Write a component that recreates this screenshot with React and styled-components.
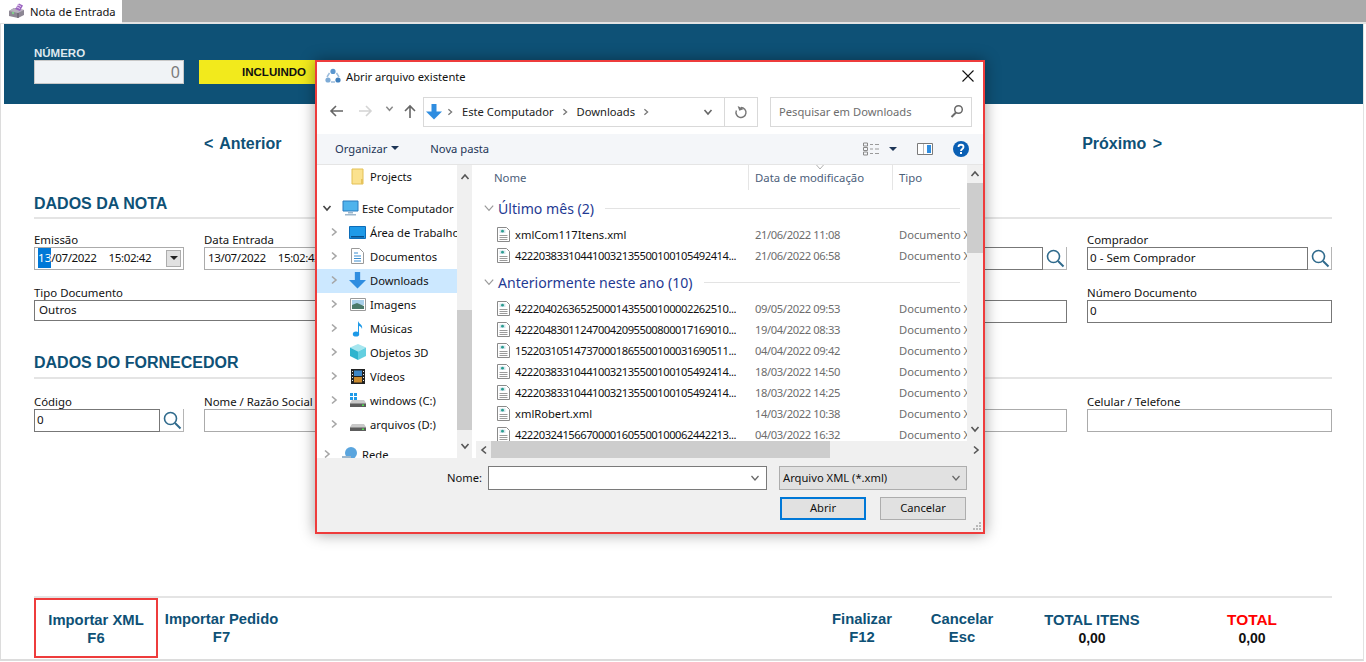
import React from "react";
import styled, { createGlobalStyle } from "styled-components";

const Global = createGlobalStyle`
  html, body { margin: 0; padding: 0; background: #fff; }
  body { width: 1366px; height: 662px; overflow: hidden; font-family: "Noto Sans", "Open Sans", sans-serif; }
  * { box-sizing: border-box; }
`;

const UI = `"Noto Sans", "Open Sans", sans-serif`;
const HEAD = `"Liberation Sans", Arial, sans-serif`;
const NAVY = "#0e5176";

const Screen = styled.div`position: relative; width: 1366px; height: 662px; overflow: hidden;`;

const TabBar = styled.div`
  height: 24px; background: #ababab; border-bottom: 2px solid #e3e3e3; display: flex;
`;
const Tab = styled.div`
  width: 122px; height: 23px; background: #fff; display: flex; align-items: center; gap: 5px;
  padding: 0 0 1px 8px; font: 11.2px ${UI}; color: #111;
`;
const Frame = styled.div`
  width: 1364px; height: 637px; border-left: 1px solid #dcdcdc; border-right: 1px solid #e2e2e2; border-bottom: 2px solid #dcdcdc;
  display: flex; flex-direction: column;
`;
const Header = styled.header`
  margin-left: 3px; height: 80px; background: ${NAVY}; padding: 0 0 20px 30px; display: flex; gap: 15px; align-items: flex-end;
`;
const NumberField = styled.div`width: 150px; display: flex; flex-direction: column;`;
const NumberLabel = styled.label`font: bold 11.5px/14px ${HEAD}; color: #dfe8ee;`;
const NumberInput = styled.div`
  height: 24px; background: #f0f3f6; border: 1px solid #c8c8c8; text-align: right; padding-right: 3px;
  font: 16px/22px ${UI}; color: #7b7b7b;
`;
const StatusBadge = styled.div`
  width: 150px; height: 24px; background: #f2ea1c; font: bold 11.5px/24px ${HEAD}; color: #111; text-align: center;
`;
const Content = styled.main`flex: 1; padding: 0 31px 0 33px; display: flex; flex-direction: column;`;
const Pager = styled.nav`
  height: 78px; display: flex; justify-content: space-between; align-items: center; padding: 2px 170px 0 170px;
  font: bold 16px ${HEAD}; color: ${NAVY};
  word-spacing: 2px;
`;
const SectionTitle = styled.h2`
  margin: ${p => p.$top}px 0 0; font: bold 16px/18px ${HEAD}; color: ${NAVY}; padding-bottom: ${p => p.$bottom}px; border-bottom: 2px solid #e4e4e4;
`;
const Row = styled.div`display: flex; gap: 20px; margin-top: ${p => p.$top}px;`;
const Field = styled.div`
  flex: ${p => (p.$w ? `0 0 ${p.$w}px` : "1")}; min-width: 0; display: flex; flex-direction: column;
`;
const Label = styled.label`font: 11.4px/13px ${UI}; color: #111; white-space: nowrap; height: 14px;`;
const Inputs = styled.div`display: flex;`;
const Input = styled.div`
  flex: 1; height: ${p => p.$h || 23}px; border: 1px solid ${p => (p.$strong ? "#777" : "#ababab")}; background: #fff;
  font: 11.6px/${p => (p.$h || 23) - 3}px ${UI}; color: #111; padding: 0 0 1px ${p => p.$pad ?? 1}px; white-space: pre;
  display: flex; align-items: center; min-width: 0; overflow: hidden;
`;
const DateText = styled.span`letter-spacing: -0.4px;`;
const Selected = styled.span`background: #0078d7; color: #fff;`;
const TimeText = styled.span`margin-left: 12px; letter-spacing: -0.4px;`;
const DropBtn = styled.span`
  margin-left: auto; margin-right: 2px; width: 15px; height: 17px; background: #e1e1e1; border: 1px solid #adadad;
  display: flex; align-items: center; justify-content: center;
`;
const Caret = styled.i`
  display: block; width: 0; height: 0; border-left: ${p => p.$s || 4}px solid transparent; border-right: ${p => p.$s || 4}px solid transparent;
  border-top: ${p => p.$s || 4}px solid ${p => p.$c || "#222"};
`;
const LookupBtn = styled.span`
  width: 24px; height: 23px; border-right: 1px solid #b5b5b5; border-bottom: 1px solid #b5b5b5; display: flex; align-items: center; justify-content: center;
`;
const Footer = styled.footer`
  margin-top: auto; height: 63px; border-top: 2px solid #e4e4e4; display: flex; position: relative;
`;
const FooterBtn = styled.button`
  flex: 0 0 ${p => p.$w}px; margin: 0; padding: 0 0 2px; border: 0; background: none; font: bold 14.8px/18px ${HEAD}; color: ${NAVY};
  ${p => p.$left && "margin-left: auto;"}
`;
const Annotated = styled(FooterBtn)`border: 2px solid #ee3c3c; height: 60px; padding: 1px 0 0;`;
const TotalBox = styled.div`
  flex: 0 0 160px; text-align: center; padding-top: 13px; font: bold 14px/18px ${HEAD}; color: #111;
`;
const TotalTitle = styled.div`color: ${p => p.$c}; font-size: ${p => p.$fs}px;`;

/* dialog */
const Dialog = styled.div`
  position: absolute; left: 315px; top: 60px; width: 670px; height: 474px; background: #fff; border: 2px solid #ee3c3c;
  box-shadow: 0 0 14px rgba(0,0,0,.38); display: flex; flex-direction: column; color: #111; font: 11.2px ${UI};
`;
const TitleBar = styled.div`height: 28px; display: flex; align-items: center; padding: 0 8px; gap: 5px;`;
const TitleText = styled.span`flex: 1;`;
const NavBar = styled.div`height: 44px; display: flex; padding: 7px 11px 7px 0; align-items: stretch;`;
const NavIcons = styled.div`width: 106px; display: flex; align-items: center; position: relative; flex: none;`;
const NavIcon = styled.span`position: absolute; left: ${p => p.$x}px; top: 7px; display: flex;`;
const Crumbs = styled.div`
  width: 335px; border: 1px solid #d9d9d9; display: flex; align-items: center; flex: none; color: #222;
`;
const CrumbIcon = styled.span`margin: 0 4px 0 2px; display: flex;`;
const Crumb = styled.span`margin: 0 7px 2px 8px; white-space: nowrap;`;
const CrumbTail = styled.div`margin-left: auto; display: flex; align-items: stretch; height: 100%;`;
const CrumbDrop = styled.span`width: 32px; display: flex; align-items: center; justify-content: center;`;
const CrumbRefresh = styled.span`width: 33px; border-left: 1px solid #d9d9d9; display: flex; align-items: center; justify-content: center;`;
const SearchBox = styled.div`
  margin-left: 12px; flex: 1; border: 1px solid #d9d9d9; display: flex; align-items: center; padding: 0 7px 2px 8px; color: #6d6d6d; justify-content: space-between;
`;
const ToolBar = styled.div`
  height: 31px; background: #f4f6f9; border-bottom: 1px solid #e5e5e5; display: flex; align-items: center; padding: 0 14px 2px 18px;
`;
const ToolItem = styled.span`display: inline-flex; align-items: center; gap: 4px; margin-right: ${p => p.$mr || 0}px; color: #1d3557;`;
const ToolRight = styled.div`margin-left: auto; display: flex; align-items: center; gap: 20px; margin-bottom: -2px;`;
const ViewGroup = styled.span`display: flex; align-items: center; gap: 9px;`;
const Body = styled.div`height: 293px; display: flex; flex: none;`;
const Tree = styled.div`width: 140px; overflow: hidden; flex: none;`;
const TreeRow = styled.div`
  height: 24px; display: flex; align-items: center; position: relative; white-space: nowrap; overflow: hidden;
  padding: 0 0 2px ${p => p.$indent}px; margin-top: ${p => p.$top || 0}px; background: ${p => (p.$sel ? "#cce8ff" : "transparent")};
`;
const TreeChevron = styled.span`width: 14px; flex: none; display: flex; justify-content: center; margin-right: 7px;`;
const TreeIcon = styled.span`width: 19px; flex: none; display: flex; justify-content: center; margin-right: ${p => p.$mr}px;`;
const TreeFolder = styled.span`display: flex; margin-right: 5px;`;
const VScroll = styled.div`
  width: ${p => p.$w}px; flex: none; background: #f0f0f0; display: flex; flex-direction: column;
`;
const ScrollBtn = styled.span`height: ${p => p.$h || 24}px; flex: none; display: flex; align-items: center; justify-content: center;`;
const Thumb = styled.span`
  display: block; flex: none; background: #cdcdcd; height: ${p => p.$h}px; margin-top: ${p => p.$mt}px;
`;
const ScrollEnd = styled.span`margin-top: auto; height: 24px; display: flex; align-items: center; justify-content: center;`;
const FilePane = styled.div`margin-left: 4px; flex: 1; min-width: 0; display: flex; flex-direction: column; position: relative;`;
const PaneTop = styled.div`flex: 1; min-height: 0; display: flex;`;
const FileArea = styled.div`flex: 1; min-width: 0; overflow: hidden;`;
const ColHead = styled.div`height: 25px; display: flex; color: #4c607a; position: relative; font-size: 11.35px;`;
const Col = styled.span`
  flex: 0 0 ${p => p.$w}px; padding-left: ${p => p.$pad}px; line-height: 26px; border-right: ${p => (p.$div ? "1px solid #e5e5e5" : "0")};
  white-space: nowrap;
`;
const SortMark = styled.span`position: absolute; left: 339px; top: -3px; display: flex;`;
const GroupHead = styled.div`
  height: 24px; margin-top: ${p => p.$top}px; margin-bottom: 4px; display: flex; align-items: center; padding-left: 7px; color: #1f3a93; font-size: 14.1px; gap: 3px;
`;
const GroupLine = styled.span`flex: 1; height: 1px; background: #e3e3e3; margin: 0 7px 0 8px;`;
const FileRow = styled.div`height: 21px; display: flex; align-items: center; color: #111; white-space: nowrap;`;
const FileName = styled.span`
  flex: 0 0 279px; padding-left: 21px; display: flex; align-items: center; gap: 5px; overflow: hidden;
  letter-spacing: ${p => (p.$digits ? "-0.47px" : "0")};
  svg { flex: none; }
`;
const FileDate = styled.span`flex: 0 0 144px; color: #6d6d6d; letter-spacing: -0.38px;`;
const FileType = styled.span`flex: none; color: #6d6d6d;`;
const HScroll = styled.div`height: 17px; background: #f0f0f0; display: flex; align-items: center; flex: none;`;
const HThumb = styled.span`display: block; width: 339px; height: 17px; background: #cdcdcd;`;
const HBtn = styled.span`width: 15px; flex: none; display: flex; justify-content: center; margin-left: ${p => (p.$end ? "auto" : 0)};`;
const BottomBar = styled.div`flex: 1; background: #f0f0f0; position: relative; padding: 8px 16px 0 130px;`;
const NameRow = styled.div`display: flex; align-items: center; height: 24px;`;
const NameLabel = styled.span`margin: 0 5px 2px 0; width: 36px;`;
const NameInput = styled.div`
  width: 279px; height: 24px; background: #fff; border: 1px solid #7a7a7a; display: flex; align-items: center; justify-content: flex-end; padding-right: 6px;
`;
const TypeSelect = styled.div`
  margin-left: 12px; width: 188px; height: 24px; background: #e1e1e1; border: 1px solid #adadad; display: flex; align-items: center; justify-content: space-between; padding: 0 5px 0 3px;
`;
const TypeText = styled.span`padding-bottom: 2px;`;
const BtnRow = styled.div`display: flex; justify-content: flex-end; gap: 14px; margin: 7px 1px 0 0;`;
const DlgBtn = styled.button`
  width: 86px; height: 23px; padding: 0 0 2px; background: #e1e1e1; font: 11.2px ${UI}; color: #111;
  border: ${p => (p.$primary ? "2px solid #0078d7" : "1px solid #adadad")};
`;
const Grip = styled.span`position: absolute; right: 1px; bottom: 1px; display: flex;`;

const Svg = ({ w = 16, h = 16, vb, children }) => <svg width={w} height={h} viewBox={vb || `0 0 ${w} ${h}`}>{children}</svg>;

const Magnifier = () => (
  <Svg w={20} h={20}><circle cx="8.5" cy="8.5" r="6" fill="none" stroke="#2f6a8c" strokeWidth="1.6" /><path d="M13 13l5.5 5.5" stroke="#2f6a8c" strokeWidth="2" /></Svg>
);
const Chev = ({ dir = "right", c = "#a6a6a6", s = 10, sw = 1.6 }) => {
  const d = { right: "M3 1.5L7 5L3 8.5", left: "M7 1.5L3 5L7 8.5", up: "M1.5 7L5 3L8.5 7", down: "M1.5 3L5 7L8.5 3" }[dir];
  return <Svg w={s} h={s} vb="0 0 10 10"><path d={d} fill="none" stroke={c} strokeWidth={sw} /></Svg>;
};
const DownArrow = ({ s = 16 }) => (
  <Svg w={s} h={s} vb="0 0 16 16"><path d="M5.5 0h5v7.5H16L8 15.5 0 7.5h5.5z" fill="#2f8de0" /></Svg>
);
const AppIcon = () => (
  <Svg w={17} h={16}>
    <path d="M1 8l5-3 10 2v5l-6 3-9-2z" fill="#8d8794" />
    <path d="M1 8l5-3 10 2-6 3z" fill="#b8b2bf" />
    <path d="M7 6l4-5.5 4 2L12 8z" fill="#9a63c0" />
    <path d="M9 1.5l4 2M8 3.5l4 2" stroke="#e6d3f2" strokeWidth="1" />
    <circle cx="5" cy="10" r="1.2" fill="#7fd08a" />
    <path d="M10 10v5" stroke="#5d5763" />
  </Svg>
);
const DialogIcon = () => (
  <Svg w={16} h={16}>
    <circle cx="8" cy="3.4" r="2.6" fill="#5b97cf" />
    <circle cx="3" cy="12" r="2.6" fill="#7eabd6" />
    <circle cx="13" cy="12" r="2.6" fill="#3f7fbd" />
    <path d="M4.5 5L2 9M11.5 5L14 9M6 14h4" fill="none" stroke="#9dbddc" strokeWidth="1.5" />
  </Svg>
);
const FolderIcon = () => (
  <Svg w={14} h={17}><path d="M1 1h11v15H1z" fill="#fbe28f" stroke="#e3c055" /><path d="M10 11h2v5h-2z" fill="#e6c35c" /></Svg>
);
const PcIcon = () => (
  <Svg w={17} h={16}><path d="M1 1h15v10H1z" fill="#4fb3ec" stroke="#2a7bbd" /><path d="M6 12h5v1.5H6zM3 14h11v1.5H3z" fill="#9db7cc" /></Svg>
);
const DesktopIcon = () => (
  <Svg w={17} h={13}><path d="M.5.5h16v12H.5z" fill="#1e9ae8" stroke="#0c6cb8" /><path d="M2 10h13v1.5H2z" fill="#0a4f8a" /></Svg>
);
const DocsIcon = () => (
  <Svg w={13} h={16}><path d="M.5.5h8l4 4v11H.5z" fill="#fff" stroke="#9a9a9a" /><path d="M3 5h4M3 8h7M3 10.5h7M3 13h7" stroke="#3a8dd0" /></Svg>
);
const ImageIcon = () => (
  <Svg w={16} h={13}><path d="M.5.5h15v12H.5z" fill="#fff" stroke="#9a9a9a" /><path d="M2 2h12v5H2z" fill="#a9d0ea" /><path d="M2 7l5-2 7 3v3H2z" fill="#4a7a6a" /></Svg>
);
const MusicIcon = () => (
  <Svg w={12} h={17}><ellipse cx="4" cy="14" rx="3.2" ry="2.6" fill="#1e9ae8" /><path d="M6 14V1c1 3 5 3.5 4 8-.6-2.2-2-3-3-3v8z" fill="#1e9ae8" /></Svg>
);
const CubeIcon = () => (
  <Svg w={16} h={16}><path d="M8 0l8 3.5-8 4-8-4z" fill="#a6e6ef" /><path d="M0 3.5l8 4V16l-8-4z" fill="#2fb4ce" /><path d="M16 3.5l-8 4V16l8-4z" fill="#63cfe0" /></Svg>
);
const FilmIcon = () => (
  <Svg w={14} h={15}><path d="M0 0h14v15H0z" fill="#222" /><path d="M3 1.5h8v5.5H3z" fill="#3d86c6" /><path d="M3 8h8v5.5H3z" fill="#c98a2e" /><path d="M1 2h1v1H1zm0 3h1v1H1zm0 3h1v1H1zm0 3h1v1H1zm11-9h1v1h-1zm0 3h1v1h-1zm0 3h1v1h-1zm0 3h1v1h-1z" fill="#eee" /></Svg>
);
const DriveIcon = ({ win }) => (
  <Svg w={16} h={14}>
    {win && <path d="M0 0h3v3H0zm4 0h3v3H4zM0 4h3v3H0zm4 0h3v3H4z" fill="#1e9ae8" />}
    <path d="M2 7h12l2 3v3H0v-3z" fill="#c9c9c9" /><path d="M0 10.5h16V14H0z" fill="#5d5d5d" /><path d="M12 11.5h2v1.5h-2z" fill="#4fe04f" />
  </Svg>
);
const NetIcon = () => (
  <Svg w={17} h={16}><circle cx="9" cy="7" r="6" fill="#5aa5de" /><path d="M0 10h9v5H0z" fill="#9db7cc" /></Svg>
);
const FileIcon = () => (
  <Svg w={13} h={15}>
    <path d="M.5.5h9l3 3v11H.5z" fill="#fff" stroke="#8a8a8a" />
    <path d="M2.5 2.5h6v3.5h-6z" fill="#d6e6ee" /><circle cx="5.5" cy="4.2" r="1.4" fill="#2a9d8f" />
    <path d="M2.5 8.5h8M2.5 10.5h8M2.5 12.5h8" stroke="#9a9a9a" />
  </Svg>
);

const treeItems = [
  ["Área de Trabalho", <DesktopIcon />],
  ["Documentos", <DocsIcon />],
  ["Downloads", <DownArrow s={17} />, true],
  ["Imagens", <ImageIcon />],
  ["Músicas", <MusicIcon />],
  ["Objetos 3D", <CubeIcon />],
  ["Vídeos", <FilmIcon />],
  ["windows (C:)", <DriveIcon win />],
  ["arquivos (D:)", <DriveIcon />],
];
const recent = [
  ["xmlCom117Itens.xml", "21/06/2022 11:08"],
  ["422203833104410032135500100105492414...", "21/06/2022 06:58", true],
];
const older = [
  ["422204026365250001435500100002262510...", "09/05/2022 09:53", true],
  ["422204830112470042095500800017169010...", "19/04/2022 08:33", true],
  ["152203105147370001865500100031690511...", "04/04/2022 09:42", true],
  ["422203833104410032135500100105492414...", "18/03/2022 14:50", true],
  ["422203833104410032135500100105492414...", "18/03/2022 14:25", true],
  ["xmlRobert.xml", "14/03/2022 10:38"],
  ["422203241566700001605500100062442213...", "04/03/2022 16:32", true],
];
const Files = ({ items }) => items.map(([n, d, digits], i) => (
  <FileRow key={i}>
    <FileName $digits={digits}><FileIcon />{n}</FileName>
    <FileDate>{d}</FileDate>
    <FileType>Documento XML</FileType>
  </FileRow>
));

export default function App() {
  return (
    <Screen>
      <Global />
      <TabBar><Tab><AppIcon />Nota de Entrada</Tab></TabBar>
      <Frame>
        <Header>
          <NumberField>
            <NumberLabel>NÚMERO</NumberLabel>
            <NumberInput>0</NumberInput>
          </NumberField>
          <StatusBadge>INCLUINDO</StatusBadge>
        </Header>
        <Content>
          <Pager><span>&lt; Anterior</span><span>Próximo &gt;</span></Pager>
          <SectionTitle $top={13} $bottom={4}>DADOS DA NOTA</SectionTitle>
          <Row $top={14}>
            <Field $w={150}>
              <Label>Emissão</Label>
              <Inputs><Input $pad={3}><Selected>13</Selected><DateText>/07/2022</DateText><TimeText>15:02:42</TimeText><DropBtn><Caret /></DropBtn></Input></Inputs>
            </Field>
            <Field $w={150}>
              <Label>Data Entrada</Label>
              <Inputs><Input $pad={3}><DateText>13/07/2022</DateText><TimeText>15:02:42</TimeText></Input></Inputs>
            </Field>
            <Field>
              <Label />
              <Inputs><Input $strong /><LookupBtn><Magnifier /></LookupBtn></Inputs>
            </Field>
            <Field $w={245}>
              <Label>Comprador</Label>
              <Inputs><Input $strong $pad={2}>0 - Sem Comprador</Input><LookupBtn><Magnifier /></LookupBtn></Inputs>
            </Field>
          </Row>
          <Row $top={16}>
            <Field $w={500}>
              <Label>Tipo Documento</Label>
              <Inputs><Input $strong $h={21} $pad={4}>Outros</Input></Inputs>
            </Field>
            <Field>
              <Label />
              <Inputs><Input $strong /></Inputs>
            </Field>
            <Field $w={245}>
              <Label>Número Documento</Label>
              <Inputs><Input $strong $pad={2}>0</Input></Inputs>
            </Field>
          </Row>
          <SectionTitle $top={31} $bottom={5}>DADOS DO FORNECEDOR</SectionTitle>
          <Row $top={16}>
            <Field $w={150}>
              <Label>Código</Label>
              <Inputs><Input $strong $pad={2}>0</Input><LookupBtn><Magnifier /></LookupBtn></Inputs>
            </Field>
            <Field $w={500}>
              <Label>Nome / Razão Social</Label>
              <Inputs><Input /></Inputs>
            </Field>
            <Field>
              <Label />
              <Inputs><Input /></Inputs>
            </Field>
            <Field $w={245}>
              <Label>Celular / Telefone</Label>
              <Inputs><Input /></Inputs>
            </Field>
          </Row>
          <Footer>
            <Annotated $w={124}>Importar XML<br />F6</Annotated>
            <FooterBtn $w={127}>Importar Pedido<br />F7</FooterBtn>
            <FooterBtn $w={100} $left>Finalizar<br />F12</FooterBtn>
            <FooterBtn $w={100}>Cancelar<br />Esc</FooterBtn>
            <TotalBox><TotalTitle $c={NAVY} $fs={14.8}>TOTAL ITENS</TotalTitle>0,00</TotalBox>
            <TotalBox><TotalTitle $c="#f00" $fs={15.4}>TOTAL</TotalTitle>0,00</TotalBox>
          </Footer>
        </Content>
      </Frame>

      <Dialog>
        <TitleBar>
          <DialogIcon />
          <TitleText>Abrir arquivo existente</TitleText>
          <Svg w={14} h={14}><path d="M1.5 1.5l11 11M12.5 1.5l-11 11" stroke="#111" strokeWidth="1.1" /></Svg>
        </TitleBar>
        <NavBar>
          <NavIcons>
            <NavIcon $x={12}><Svg w={15} h={14}><path d="M14 7H2M7 2L2 7l5 5" fill="none" stroke="#666" strokeWidth="1.6" /></Svg></NavIcon>
            <NavIcon $x={41}><Svg w={15} h={14}><path d="M1 7h12M8 2l5 5-5 5" fill="none" stroke="#d4d4d4" strokeWidth="1.6" /></Svg></NavIcon>
            <NavIcon $x={68}><Chev dir="down" c="#8a8a8a" s={9} /></NavIcon>
            <NavIcon $x={86}><Svg w={14} h={15}><path d="M7 14V2M2 7l5-5 5 5" fill="none" stroke="#666" strokeWidth="1.6" /></Svg></NavIcon>
          </NavIcons>
          <Crumbs>
            <CrumbIcon><DownArrow /></CrumbIcon>
            <Chev c="#777" s={8} />
            <Crumb>Este Computador</Crumb>
            <Chev c="#777" s={8} />
            <Crumb>Downloads</Crumb>
            <Chev c="#777" s={8} />
            <CrumbTail>
              <CrumbDrop><Chev dir="down" c="#666" /></CrumbDrop>
              <CrumbRefresh><Svg w={14} h={14}><path d="M7 2.5a5 5 0 1 1-4.6 3" fill="none" stroke="#777" strokeWidth="1.4" /><path d="M4.5 0v5h5z" fill="#777" transform="rotate(-20 7 3)" /></Svg></CrumbRefresh>
            </CrumbTail>
          </Crumbs>
          <SearchBox>
            <span>Pesquisar em Downloads</span>
            <Svg w={14} h={14}><circle cx="8.5" cy="5.5" r="3.8" fill="none" stroke="#6a6a6a" strokeWidth="1.5" /><path d="M6 8.5L1.5 13" stroke="#6a6a6a" strokeWidth="2" /></Svg>
          </SearchBox>
        </NavBar>
        <ToolBar>
          <ToolItem $mr={31}>Organizar <Caret $s={4} $c="#1d3557" /></ToolItem>
          <ToolItem>Nova pasta</ToolItem>
          <ToolRight>
            <ViewGroup>
              <Svg w={17} h={14}><path d="M.5 1h4v3h-4zM.5 5.5h4v3h-4zM.5 10h4v3h-4z" fill="none" stroke="#8a8a8a" /><path d="M7 2.5h3M12 2.5h4M7 7h3M12 7h4M7 11.5h3M12 11.5h4" stroke="#9a9a9a" /></Svg>
              <Caret $s={4} $c="#1d3557" />
            </ViewGroup>
            <Svg w={16} h={12}><path d="M.5.5h15v11H.5z" fill="#fff" stroke="#7a7a7a" /><path d="M10 2h4v8h-4z" fill="#2f8de0" /><path d="M6.5 1v10" stroke="#bbb" /></Svg>
            <Svg w={16} h={16}>
              <circle cx="8" cy="8" r="8" fill="#0a5fb4" />
              <path d="M5.5 6C5.5 3 10.5 3 10.5 6c0 2-2.5 2-2.5 4" fill="none" stroke="#fff" strokeWidth="1.8" /><path d="M7 11h2v2H7z" fill="#fff" />
            </Svg>
          </ToolRight>
        </ToolBar>
        <Body>
          <Tree>
            <TreeRow $indent={34}><TreeFolder><FolderIcon /></TreeFolder>Projects</TreeRow>
            <TreeRow $indent={3} $top={8}><TreeChevron><Chev dir="down" c="#444" /></TreeChevron><TreeIcon $mr={2}><PcIcon /></TreeIcon>Este Computador</TreeRow>
            {treeItems.map(([t, icon, sel]) => (
              <TreeRow key={t} $indent={10} $sel={sel}><TreeChevron><Chev c="#a6a6a6" /></TreeChevron><TreeIcon $mr={3}>{icon}</TreeIcon>{t}</TreeRow>
            ))}
            <TreeRow $indent={3} $top={6}><TreeChevron><Chev c="#a6a6a6" /></TreeChevron><TreeIcon $mr={2}><NetIcon /></TreeIcon>Rede</TreeRow>
          </Tree>
          <VScroll $w={15}>
            <ScrollBtn><Chev dir="up" c="#555" /></ScrollBtn>
            <Thumb $h={120} $mt={121} />
            <ScrollEnd><Chev dir="down" c="#555" /></ScrollEnd>
          </VScroll>
          <FilePane>
            <PaneTop>
              <FileArea>
                <ColHead>
                  <Col $w={273} $pad={18} $div>Nome</Col>
                  <Col $w={144} $pad={6} $div>Data de modificação</Col>
                  <Col $w={75} $pad={6}>Tipo</Col>
                  <SortMark><Chev dir="down" c="#b0b0b0" sw={1} /></SortMark>
                </ColHead>
                <GroupHead $top={6}><Chev dir="down" c="#9a9a9a" s={12} sw={1} />Último mês (2)<GroupLine /></GroupHead>
                <Files items={recent} />
                <GroupHead $top={4}><Chev dir="down" c="#9a9a9a" s={12} sw={1} />Anteriormente neste ano (10)<GroupLine /></GroupHead>
                <Files items={older} />
              </FileArea>
              <VScroll $w={16}>
                <ScrollBtn $h={18}><Chev dir="up" c="#555" /></ScrollBtn>
                <Thumb $h={70} $mt={0} />
                <ScrollEnd><Chev dir="down" c="#555" /></ScrollEnd>
              </VScroll>
            </PaneTop>
            <HScroll>
              <HBtn><Chev dir="left" c="#555" /></HBtn>
              <HThumb />
              <HBtn $end><Chev c="#555" /></HBtn>
            </HScroll>
          </FilePane>
        </Body>
        <BottomBar>
          <NameRow>
            <NameLabel>Nome:</NameLabel>
            <NameInput><Chev dir="down" c="#666" sw={1.2} /></NameInput>
            <TypeSelect><TypeText>Arquivo XML (*.xml)</TypeText><Chev dir="down" c="#666" sw={1.2} /></TypeSelect>
          </NameRow>
          <BtnRow>
            <DlgBtn $primary>Abrir</DlgBtn>
            <DlgBtn>Cancelar</DlgBtn>
          </BtnRow>
          <Grip><Svg w={10} h={10}><path d="M7 1h2v2H7zM4 4h2v2H4zM7 4h2v2H7zM1 7h2v2H1zM4 7h2v2H4zM7 7h2v2H7z" fill="#b8b8b8" /></Svg></Grip>
        </BottomBar>
      </Dialog>
    </Screen>
  );
}
